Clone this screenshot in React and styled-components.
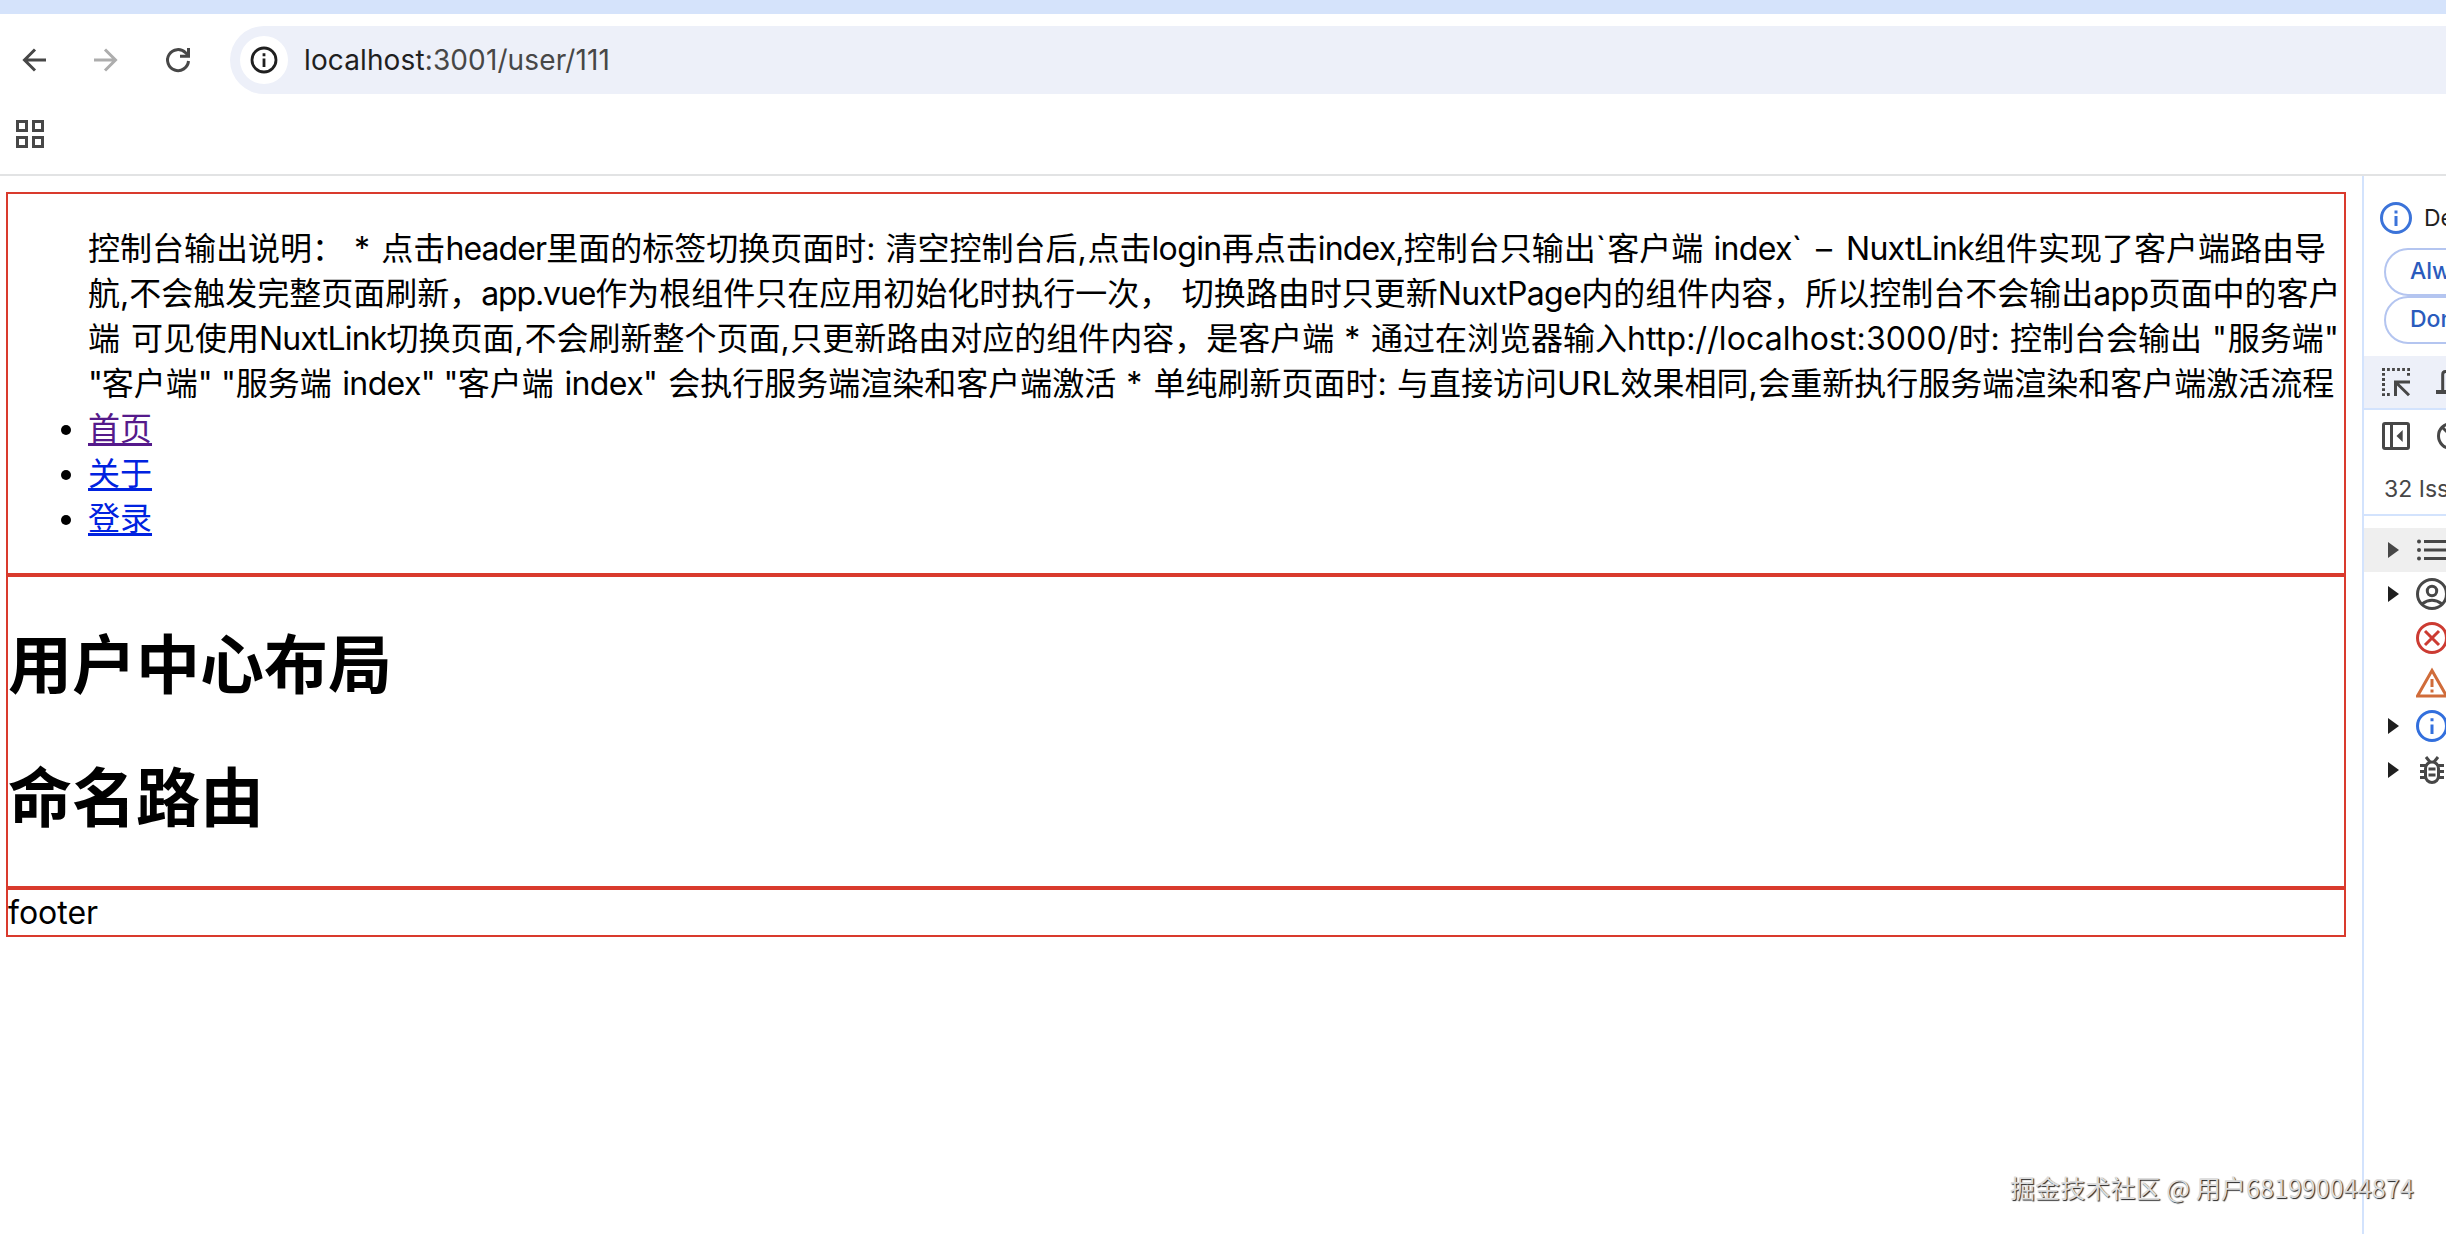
import React from 'react';
import styled, { createGlobalStyle } from 'styled-components';

const GlobalStyle = createGlobalStyle`
    * {
        box-sizing: border-box;
    }

    body {
        margin: 0;
        background: #fff;
        font-family: Inter, 'Noto Sans CJK SC', sans-serif;
        overflow: hidden;
    }

    svg {
        display: block;
        flex: none;
    }
`;

const Window = styled.div`
    position: relative;
    display: flex;
    flex-direction: column;
    width: 2446px;
    height: 1234px;
    overflow: hidden;
`;

const TabStrip = styled.div`
    flex: none;
    height: 14px;
    background: #d5e3fb;
`;

const Toolbar = styled.div`
    flex: none;
    display: flex;
    align-items: center;
    height: 92px;
    padding-left: 16px;
`;

const NavButton = styled.div`
    width: 36px;
    margin-right: 36px;
    color: ${(props) => (props.$disabled ? '#adadad' : '#474747')};
`;

const AddressBar = styled.div`
    flex: 1;
    display: flex;
    align-items: center;
    height: 68px;
    margin-left: -2px;
    padding-left: 10px;
    border-radius: 34px 0 0 34px;
    background: #edf0f9;
`;

const SiteInfo = styled.div`
    display: flex;
    align-items: center;
    justify-content: center;
    width: 48px;
    height: 48px;
    margin-right: 16px;
    border-radius: 50%;
    background: #fff;
    color: #1f1f1f;
`;

const Url = styled.div`
    font-size: 28px;
    letter-spacing: 0.12px;
    color: #474747;

    span {
        color: #1f1f1f;
    }
`;

const BookmarksBar = styled.div`
    flex: none;
    display: flex;
    height: 70px;
    padding: 14px 16px;
    border-bottom: 2px solid #e2e3e4;
    color: #474747;
`;

const Content = styled.div`
    flex: 1;
    display: flex;
`;

const Page = styled.main`
    width: 2362px;
    padding: 16px 16px 0 6px;
    font-size: 32px;
    line-height: 45px;
    color: #000;
`;

const Box = styled.section`
    border: 2px solid #d93a2d;
`;

const NavList = styled.ul`
    margin: 32px 0;
    padding-left: 80px;
`;

const Line = styled.div`
    white-space: pre;
`;

const Latin = styled.span`
    letter-spacing: ${(props) => props.$spacing}px;
`;

const NavLink = styled.a`
    color: ${(props) => (props.$visited ? '#551a8b' : '#0022e0')};
    text-decoration: underline;
    text-decoration-thickness: 3px;
    text-underline-offset: 3px;
`;

const Title = styled.h1`
    margin: 42.88px 0;
    font-size: 64px;
    line-height: 90px;
    font-weight: 700;
`;

const DevTools = styled.aside`
    flex: none;
    width: 84px;
    border-left: 2px solid #d3e3fd;
    overflow: hidden;
    white-space: nowrap;
    font-size: 23px;
    color: #1f1f1f;
`;

const Infobar = styled.div`
    height: 180px;
    padding: 26px 0 0 16px;
`;

const InfobarText = styled.div`
    display: flex;
    align-items: center;
    gap: 12px;
    height: 32px;
    margin-bottom: 14px;
`;

const Pill = styled.div`
    width: 220px;
    height: 48px;
    margin-left: 4px;
    padding-left: 24px;
    border: 2px solid #b4c5f0;
    border-radius: 24px;
    line-height: 43px;
    font-weight: 500;
    color: #2a5bbd;
`;

const PanelBar = styled.div`
    display: flex;
    align-items: center;
    gap: 24px;
    height: ${(props) => props.$height}px;
    padding-left: 16px;
    background: ${(props) => props.$bg || 'transparent'};
    border-bottom: ${(props) => (props.$line ? '2px solid #d3e3fd' : 'none')};
    color: #474747;
`;

const Issues = styled.div`
    height: 54px;
    padding-left: 20px;
    line-height: 54px;
    border-bottom: 2px solid #d3e3fd;
    color: #474747;
`;

const MessageList = styled.div`
    padding-top: 12px;
`;

const MessageRow = styled.div`
    display: flex;
    align-items: center;
    height: 44px;
    padding-left: 24px;
    background: ${(props) => (props.$selected ? '#efefef' : 'transparent')};
    color: ${(props) => props.$color || '#474747'};
`;

const Arrow = styled.span`
    flex: none;
    width: 11px;
    height: 16px;
    margin-right: 17px;
    background: ${(props) => (props.$selected ? '#474747' : '#1f1f1f')};
    clip-path: polygon(0 0, 100% 50%, 0 100%);
    visibility: ${(props) => (props.$hidden ? 'hidden' : 'visible')};
`;

const Watermark = styled.div`
    position: absolute;
    left: 2010px;
    top: 1169px;
    font-family: 'Noto Sans CJK SC', sans-serif;
    font-size: 25px;
    line-height: 36px;
    letter-spacing: 0.1px;
    white-space: pre;
    color: #dcdcdc;
    text-shadow: 1px 1px 1px #222;
`;

const Svg = ({ size = 32, width = 3, children }) => (
  <svg width={size} height={size} viewBox={`0 0 ${size} ${size}`} fill="none" stroke="currentColor" strokeWidth={width}>
    {children}
  </svg>
);

const BackIcon = () => (
  <Svg size={36}>
    <path d="M30 18H8.5M19 7.5L8.5 18L19 28.5" />
  </Svg>
);

const ForwardIcon = () => (
  <Svg size={36}>
    <path d="M6 18H27.5M17 7.5L27.5 18L17 28.5" />
  </Svg>
);

const ReloadIcon = () => (
  <Svg size={36}>
    <path d="M28.5 19A10.5 10.5 0 1 1 25.6 10.8L28.5 13.8" />
    <path d="M28.5 6V14.2H20" />
  </Svg>
);

const InfoIcon = ({ size = 32, r = 14.5, width = 3 }) => (
  <Svg size={size} width={width}>
    <circle cx={size / 2} cy={size / 2} r={r} />
    <path d={`M${size / 2} ${size * 0.45}V${size * 0.75}M${size / 2} ${size * 0.26}v3`} />
  </Svg>
);

const AppsIcon = () => (
  <Svg size={28}>
    <path d="M1.5 1.5h9v9h-9zM17.5 1.5h9v9h-9zM1.5 17.5h9v9h-9zM17.5 17.5h9v9h-9z" />
  </Svg>
);

const InspectIcon = () => (
  <Svg>
    <path d="M2 3.5H30M3.5 2V30" strokeDasharray="2.8 2.24" />
    <path d="M7 28.5H9.8M28.5 7V9.8" />
    <path d="M15.5 30V16H30M16 16.5L29 29.2" />
  </Svg>
);

const DeviceIcon = () => (
  <Svg>
    <path d="M30 5.5H9.5Q6.7 5.5 6.7 8.5V24" />
    <path d="M0 26H18" strokeWidth="4" />
  </Svg>
);

const SidebarIcon = () => (
  <Svg>
    <rect x="3.5" y="3.5" width="25" height="25" rx="1.5" />
    <path d="M11.5 3V29" />
    <path d="M22.7 10V22L16.5 16Z" fill="currentColor" stroke="none" />
  </Svg>
);

const ClearIcon = () => (
  <Svg>
    <circle cx="15" cy="16" r="12.5" />
    <path d="M6.5 7.5L24 25" />
  </Svg>
);

const ListIcon = () => (
  <Svg>
    <path d="M8 7.5H32M8 16H32M8 24.5H32" />
    <g fill="currentColor" stroke="none">
      <circle cx="3" cy="7.5" r="2" />
      <circle cx="3" cy="16" r="2" />
      <circle cx="3" cy="24.5" r="2" />
    </g>
  </Svg>
);

const UserIcon = () => (
  <Svg>
    <circle cx="16" cy="16" r="14.5" />
    <circle cx="16" cy="13" r="4.7" />
    <path d="M6 26Q16 18.5 26 26" />
  </Svg>
);

const ErrorIcon = () => (
  <Svg>
    <circle cx="16" cy="16" r="14.5" />
    <path d="M9 9L23 23M23 9L9 23" />
  </Svg>
);

const WarningIcon = () => (
  <Svg>
    <path d="M16 4.5L30.5 30H1.5Z" />
    <path d="M16 13V21M16 23.5V26.5" />
  </Svg>
);

const BugIcon = () => (
  <Svg>
    <rect x="9.5" y="8" width="13" height="20.5" rx="6.5" />
    <path d="M10 3L14 8M22 3L18 8M4 11.5H10M4 17.5H9M4 23.5H10M22 11.5H28M23 17.5H28M22 23.5H28M12.5 15H19.5M12.5 21H19.5" />
  </Svg>
);

// plain strings are Chinese text, pairs are latin text with its letter spacing
const description = [
  [
    '控制台输出说明：', [' * ', 1.1], '点击', ['header', -0.9], '里面的标签切换页面时', [': ', 0.6],
    '清空控制台后', [',', 0.6], '点击', ['login', -0.6], '再点击', ['index,', -0.8], '控制台只输出', ['`', 1.2],
    '客户端', [' ', 1.2], ['index', -0.7], ['` – ', 2.5], ['NuxtLink', -0.74], '组件实现了客户端路由导',
  ],
  [
    '航', [',', 0], '不会触发完整页面刷新，', ['app.vue', -1.13], '作为根组件只在应用初始化时执行一次，', [' ', 1.4],
    '切换路由时只更新', ['NuxtPage', -0.6], '内的组件内容，所以控制台不会输出', ['app', -0.6], '页面中的客户',
  ],
  [
    '端', [' ', 2], '可见使用', ['NuxtLink', -0.8], '切换页面', [',', 0.6], '不会刷新整个页面', [',', 0.6],
    '只更新路由对应的组件内容，是客户端', [' * ', 0.9], '通过在浏览器输入', ['http://localhost:3000/', 0.12],
    '时', [': ', 0.65], '控制台会输出', [' "', 1], '服务端', ['"', 0],
  ],
  [
    ['"', -1.2], '客户端', ['" "', -0.3], '服务端', [' ', 1.5], ['index', -0.6], ['" "', -0.6],
    '客户端', [' ', 1.5], ['index', -0.6], ['" ', 0.6], '会执行服务端渲染和客户端激活', [' * ', 1.1],
    '单纯刷新页面时', [': ', 0.6], '与直接访问', ['URL', 0.33], '效果相同', [',', 0.6],
    '会重新执行服务端渲染和客户端激活流程',
  ],
];

const links = [
  { label: '首页', visited: true },
  { label: '关于' },
  { label: '登录' },
];

const messages = [
  { icon: <ListIcon />, expandable: true, selected: true },
  { icon: <UserIcon />, expandable: true },
  { icon: <ErrorIcon />, color: '#cc3b32' },
  { icon: <WarningIcon />, color: '#d06c3a' },
  { icon: <InfoIcon />, expandable: true, color: '#326fdd' },
  { icon: <BugIcon />, expandable: true },
];

const App = () => {
  return (
    <Window>
      <GlobalStyle />
      <TabStrip />
      <Toolbar>
        <NavButton><BackIcon /></NavButton>
        <NavButton $disabled><ForwardIcon /></NavButton>
        <NavButton><ReloadIcon /></NavButton>
        <AddressBar>
          <SiteInfo><InfoIcon size={28} r={12} width={2.8} /></SiteInfo>
          <Url><span>localhost</span>:3001/user/111</Url>
        </AddressBar>
      </Toolbar>
      <BookmarksBar>
        <AppsIcon />
      </BookmarksBar>
      <Content>
        <Page>
          <Box>
            <NavList>
              {description.map((line, index) => (
                <Line key={index}>
                  {line.map((run, i) => (
                    typeof run === 'string' ? run : <Latin key={i} $spacing={run[1]}>{run[0]}</Latin>
                  ))}
                </Line>
              ))}
              {links.map((link) => (
                <li key={link.label}>
                  <NavLink $visited={link.visited}>{link.label}</NavLink>
                </li>
              ))}
            </NavList>
          </Box>
          <Box>
            <Title>用户中心布局</Title>
            <Title>命名路由</Title>
          </Box>
          <Box as="footer">footer</Box>
        </Page>
        <DevTools>
          <Infobar>
            <InfobarText>
              <Svg>
                <g stroke="#3b73d9">
                  <circle cx="16" cy="16" r="14.5" />
                  <path d="M16 14V24M16 8.5V11.5" />
                </g>
              </Svg>
              De
            </InfobarText>
            <Pill>Alw</Pill>
            <Pill>Don</Pill>
          </Infobar>
          <PanelBar $height={54} $bg="#edf0f9" $line>
            <InspectIcon />
            <DeviceIcon />
          </PanelBar>
          <PanelBar $height={52}>
            <SidebarIcon />
            <ClearIcon />
          </PanelBar>
          <Issues>32 Iss</Issues>
          <MessageList>
            {messages.map((message, index) => (
              <MessageRow key={index} $selected={message.selected} $color={message.color}>
                <Arrow $selected={message.selected} $hidden={!message.expandable} />
                {message.icon}
              </MessageRow>
            ))}
          </MessageList>
        </DevTools>
      </Content>
      <Watermark>掘金技术社区 @ 用户681990044874</Watermark>
    </Window>
  );
};

export default App;
